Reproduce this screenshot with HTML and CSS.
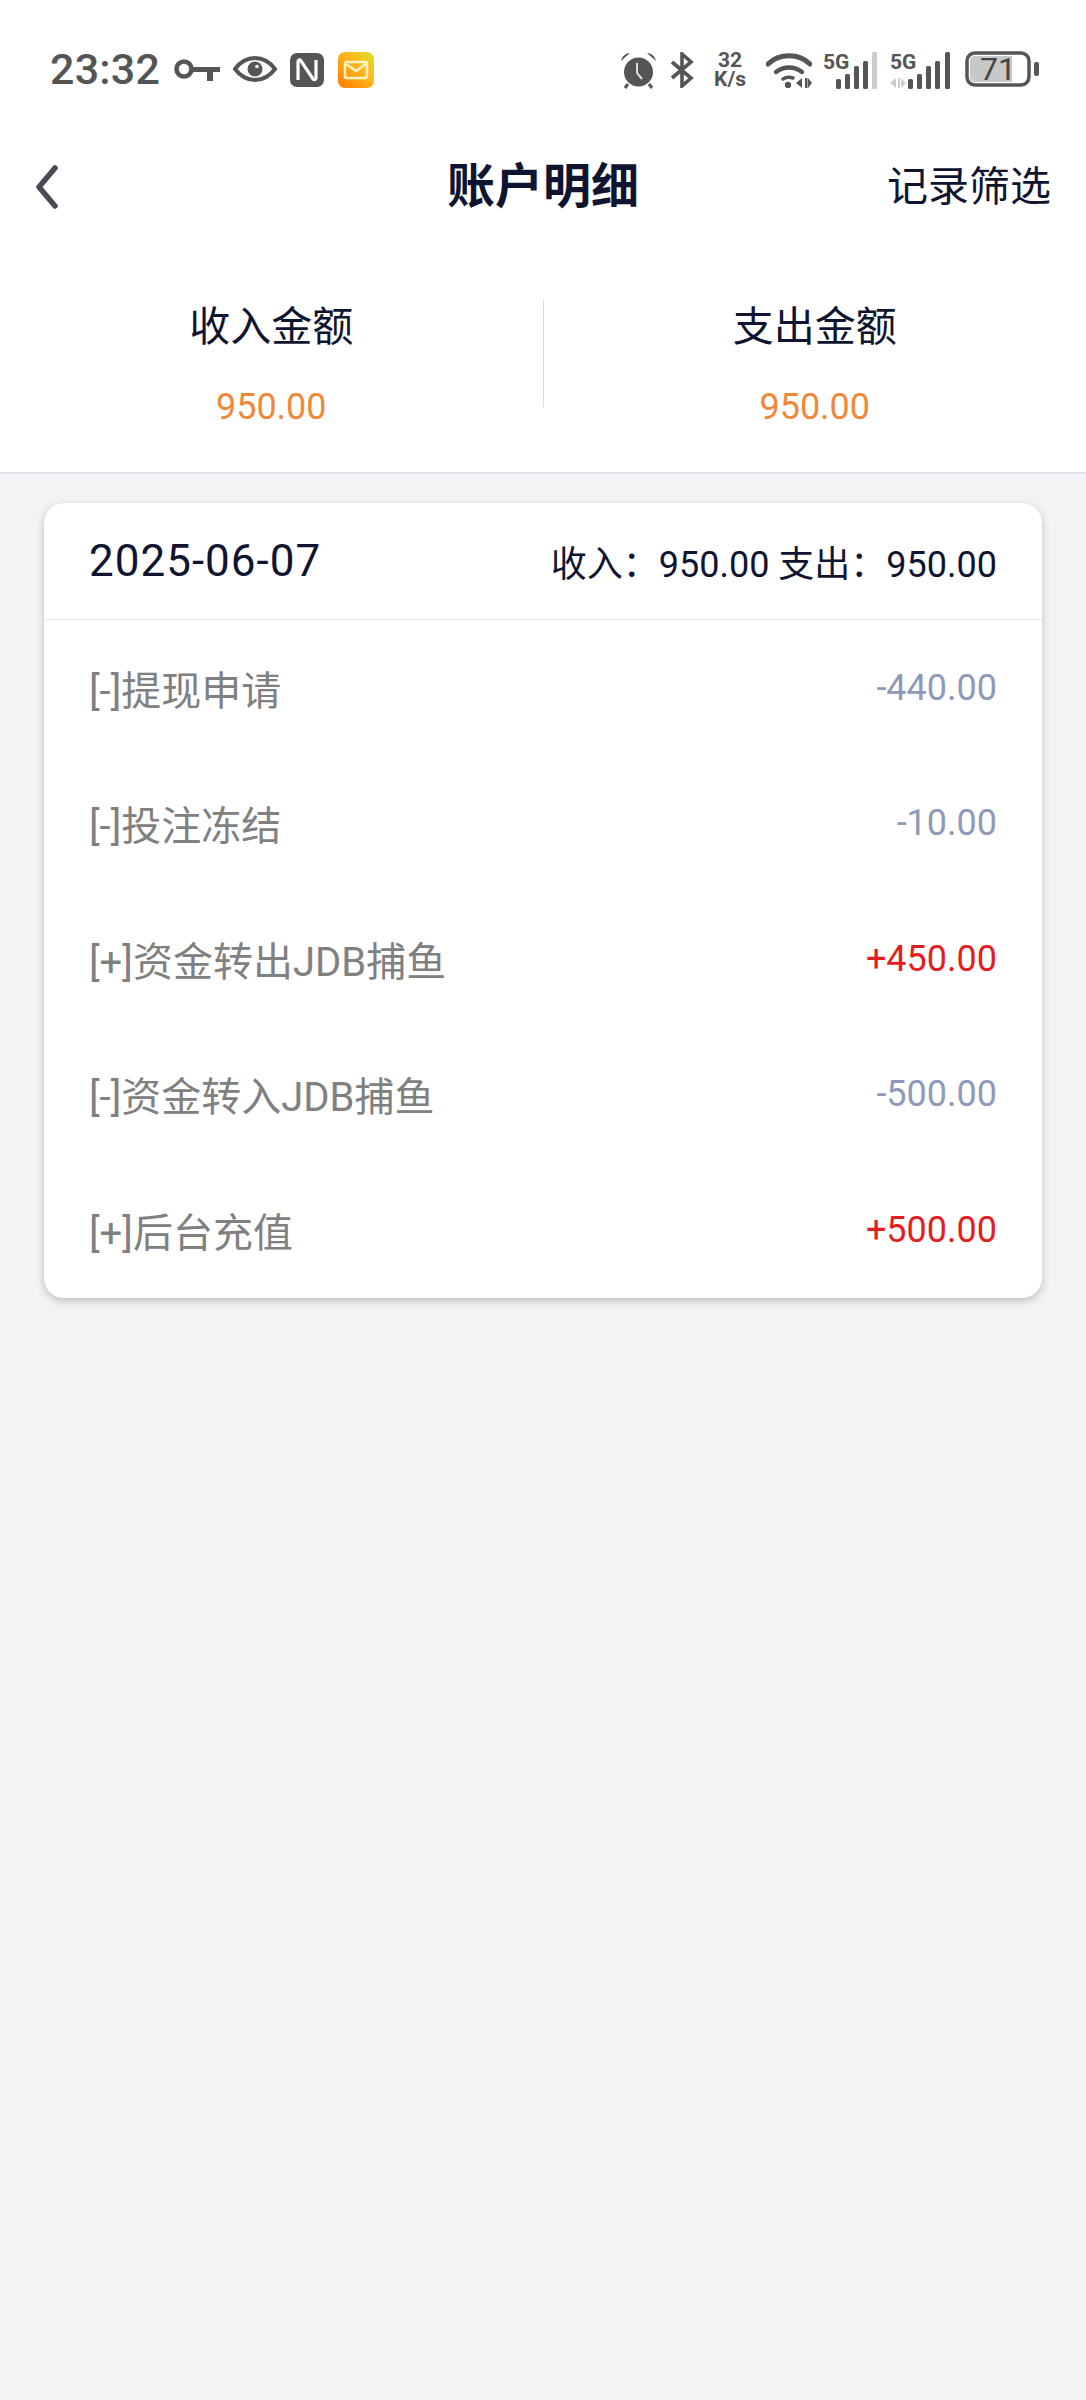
FILE: index.html
```html
<!DOCTYPE html>
<html lang="zh-CN">
<head>
  <meta charset="UTF-8" />
  <meta name="viewport" content="width=device-width, initial-scale=1" />
  <title>账户明细</title>
  <link rel="stylesheet" href="styles.css">
</head>
<body>
  <header class="top">
    <div class="status-bar">
      <div class="status-left">
        <span class="time">23:32</span>
        <svg class="ic-key" width="46" height="24" viewBox="0 0 46 24"><circle cx="10" cy="11" r="7.5" fill="none" stroke="#555" stroke-width="4.5"/><path d="M17 9h29v5h-7v9h-6v-9H17z" fill="#555"/></svg>
        <svg class="ic-eye" width="44" height="26" viewBox="0 0 44 26"><path d="M2 13C8 5 15 2 22 2s14 3 20 11c-6 8-13 11-20 11S8 21 2 13z" fill="none" stroke="#555" stroke-width="4"/><circle cx="22" cy="13" r="7.5" fill="#555"/><circle cx="24" cy="10.500" r="1.800" fill="#fff"/></svg>
        <svg class="ic-nfc" width="34" height="34" viewBox="0 0 34 34"><rect width="34" height="34" rx="7" fill="#555"/><path d="M8 27V9c0-2 2-3 3-1l12 18c1 1 3 1 3-1V7" fill="none" stroke="#fff" stroke-width="3.200"/></svg>
        <svg class="ic-mail" width="36" height="36" viewBox="0 0 36 36"><defs><linearGradient id="mailFill" x1="0" y1="1" x2="1" y2="0"><stop offset="0" stop-color="#ff7a00"/><stop offset="0.6" stop-color="#ffb81c"/><stop offset="1" stop-color="#d6e02a"/></linearGradient></defs><rect width="36" height="36" rx="7" fill="url(#mailFill)"/><rect x="7" y="10" width="22" height="16" rx="2" fill="none" stroke="#fff3c4" stroke-width="2.500"/><path d="M8 12l10 7 10-7" fill="none" stroke="#fff3c4" stroke-width="2.500"/></svg>
      </div>
      <div class="status-right">
        <svg class="ic-alarm" width="37" height="37" viewBox="0 0 37 37"><circle cx="18.500" cy="20" r="14.500" fill="#555"/><path d="M1 9c1-5 5-8 9-8zM36 9c-1-5-5-8-9-8z" fill="#555"/><path d="M8 32l-3 4M29 32l3 4" stroke="#555" stroke-width="3"/><path d="M17 11v10l5 6" fill="none" stroke="#ddd" stroke-width="2"/></svg>
        <svg class="ic-bt" width="24" height="36" viewBox="0 0 24 36"><path d="M2 10l19 16-9 8V2l9 8L2 26" fill="none" stroke="#555" stroke-width="3.600"/></svg>
        <div class="speed"><span>32</span><span>K/s</span></div>
        <svg class="ic-wifi" width="46" height="36" viewBox="0 0 46 36"><path d="M2 12C13 1 33 1 44 12" fill="none" stroke="#555" stroke-width="5" stroke-linecap="round"/><path d="M10 20c8-6 18-6 26 0" fill="none" stroke="#555" stroke-width="4.500" stroke-linecap="round"/><path d="M17 27c3-2 7-2 10-1" fill="none" stroke="#555" stroke-width="3.500" stroke-linecap="round"/><circle cx="22" cy="33" r="3.200" fill="#555"/><path d="M36 26l-6 5 6 5zM39 26h2.500v10H39zM42 26l4 5-4 5z" fill="#555"/></svg>
        <svg class="ic-signal" width="54" height="37" viewBox="0 0 54 37"><text class="net" x="0" y="17">5G</text><rect x="13" y="27" width="5" height="10" rx="1.500" fill="#555"/><rect x="22" y="22" width="5" height="15" rx="1.500" fill="#555"/><rect x="31" y="14" width="5" height="23" rx="1.500" fill="#555"/><rect x="49" y="0" width="5" height="37" rx="1.500" fill="#ccc"/><rect x="40" y="9" width="5" height="28" rx="1.500" fill="#555"/></svg>
        <svg class="ic-signal2" width="61" height="37" viewBox="0 0 61 37"><text class="net" x="0" y="17">5G</text><path d="M6 26l-6 5 6 5zM8 26h2v10H8zM11 26l5 5-5 5z" fill="#ccc"/><rect x="18" y="27" width="5" height="10" rx="1.500" fill="#555"/><rect x="27" y="22" width="5" height="15" rx="1.500" fill="#555"/><rect x="36" y="14" width="5" height="23" rx="1.500" fill="#555"/><rect x="45" y="9" width="5" height="28" rx="1.500" fill="#555"/><rect x="55" y="0" width="5" height="37" rx="1.500" fill="#555"/></svg>
        <svg class="ic-battery" width="74" height="36" viewBox="0 0 74 36"><rect x="2" y="2" width="62" height="32" rx="8" fill="#fff" stroke="#555" stroke-width="3.500"/><path d="M5 10q0-5 5-5h37v26H10q-5 0-5-5z" fill="#c8c8c8"/><text class="batt" x="33" y="29" text-anchor="middle">71</text><rect x="69" y="11" width="5" height="14" rx="2" fill="#555"/></svg>
      </div>
    </div>
    <nav class="nav">
      <div class="nav-back">
        <svg width="24" height="44" viewBox="0 0 24 44"><path d="M20 3L4 22l16 19" fill="none" stroke="#4a4a55" stroke-width="5.500" stroke-linecap="round" stroke-linejoin="round"/></svg>
      </div>
      <h1 class="nav-title">账户明细</h1>
      <div class="nav-action">记录筛选</div>
    </nav>
    <section class="summary">
      <div class="summary-item">
        <div class="summary-label">收入金额</div>
        <div class="summary-value">950.00</div>
      </div>
      <div class="summary-line"></div>
      <div class="summary-item">
        <div class="summary-label">支出金额</div>
        <div class="summary-value">950.00</div>
      </div>
    </section>
  </header>

  <main class="content">
    <section class="card">
      <div class="card-head">
        <span class="card-date">2025-06-07</span>
        <span class="card-total">收入：950.00 支出：950.00</span>
      </div>
      <div class="row"><span class="row-name">[-]提现申请</span><span class="row-amount out">-440.00</span></div>
      <div class="row"><span class="row-name">[-]投注冻结</span><span class="row-amount out">-10.00</span></div>
      <div class="row"><span class="row-name">[+]资金转出JDB捕鱼</span><span class="row-amount in">+450.00</span></div>
      <div class="row"><span class="row-name">[-]资金转入JDB捕鱼</span><span class="row-amount out">-500.00</span></div>
      <div class="row"><span class="row-name">[+]后台充值</span><span class="row-amount in">+500.00</span></div>
    </section>
  </main>
</body>
</html>
```
FILE: styles.css
```css
* {
  box-sizing: border-box;
}
body {
  margin: 0;
  min-height: 2400px;
  background: #f2f3f5;
  color: #0f1430;
  font-family: Roboto, "Noto Sans CJK SC", sans-serif;
}
.top {
  background: #fff;
  border-bottom: 2px solid #e2e3ea;
}

/* status bar */
.status-bar {
  height: 140px;
  padding: 51px 47px 0 50px;
  display: flex;
  justify-content: space-between;
  align-items: flex-start;
  color: #555;
}
.status-left, .status-right {
  display: flex;
  align-items: flex-start;
}
.time {
  font-size: 43px;
  line-height: 36px;
  font-weight: 500;
  margin-right: 14px;
  letter-spacing: 0.2px;
}
.ic-key { margin-top: 7px; margin-right: 13px; }
.ic-eye { margin-top: 5px; margin-right: 13px; }
.ic-nfc { margin-top: 2px; margin-right: 14px; }
.ic-mail { margin-top: 1px; }
.ic-alarm { margin-top: 1px; margin-right: 13px; }
.ic-bt { margin-top: 1px; margin-right: 16px; }
.speed {
  width: 40px;
  margin-right: 16px;
  display: flex;
  flex-direction: column;
  align-items: center;
  font-size: 21px;
  line-height: 19px;
  font-weight: 700;
}
.ic-wifi { margin-top: 1px; margin-right: 11px; }
.ic-signal { margin-top: 1px; margin-right: 13px; }
.ic-signal2 { margin-top: 1px; margin-right: 14px; }
.ic-battery { margin-top: 0; }
.net {
  font-family: Roboto, sans-serif;
  font-size: 21px;
  font-weight: 700;
  fill: #555;
}
.batt {
  font-family: Roboto, sans-serif;
  font-size: 32px;
  fill: #444;
}

/* nav */
.nav {
  height: 94px;
  padding: 0 35px;
  display: grid;
  grid-template-columns: 1fr auto 1fr;
  align-items: center;
}
.nav-back {
  display: flex;
  align-items: center;
}
.nav-title {
  margin: 0;
  font-size: 48px;
  line-height: 60px;
  font-weight: 700;
}
.nav-action {
  text-align: right;
  font-size: 41px;
  line-height: 56px;
}

/* totals */
.summary {
  height: 238px;
  padding-top: 65px;
  display: flex;
  align-items: flex-start;
}
.summary-item {
  flex: 1;
  text-align: center;
}
.summary-line {
  width: 1px;
  height: 108px;
  background: #d9d9de;
}
.summary-label {
  font-size: 41px;
  line-height: 56px;
}
.summary-value {
  margin-top: 28px;
  font-size: 36px;
  line-height: 48px;
  color: #f0883a;
}

/* list */
.content {
  padding: 29px 44px 0;
}
.card {
  background: #fff;
  border-radius: 20px;
  box-shadow: 0 3px 8px rgba(0, 0, 0, 0.22);
}
.card-head {
  height: 117px;
  padding: 0 45px;
  display: flex;
  justify-content: space-between;
  align-items: center;
  border-bottom: 1px solid #e4e5ea;
}
.card-date {
  font-size: 44px;
  letter-spacing: 1px;
}
.card-total {
  font-size: 36px;
}
.row {
  height: 135.500px;
  padding: 0 45px;
  display: flex;
  justify-content: space-between;
  align-items: center;
}
.row-name {
  font-size: 40px;
  color: #808080;
}
.row-amount {
  font-size: 36px;
}
.out {
  color: #8e9ab8;
}
.in {
  color: #e41e20;
}
```
